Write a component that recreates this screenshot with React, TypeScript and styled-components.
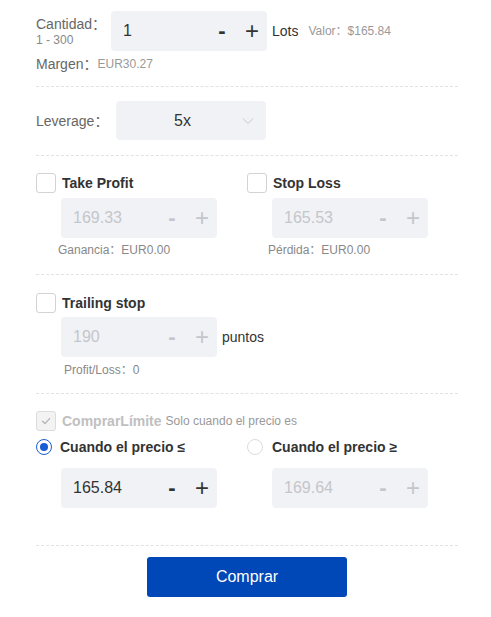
import { createGlobalStyle, styled } from "styled-components";

const GlobalStyle = createGlobalStyle`
    html, body {
        margin: 0;
        padding: 0;
        background: #fff;
        font-family: "Liberation Sans", Arial, "Noto Sans CJK SC", sans-serif;
        color: #333;
    }
`

const Page = styled.div`
    width: 422px;
    padding: 11px 33px 20px 36px;
`

const Row = styled.div<{ $mt?: number }>`
    display: flex;
    align-items: center;
    margin-top: ${p => p.$mt ?? 0}px;
`

const LabelCol = styled.div`
    width: 75px;
    display: flex;
    flex-direction: column;
`

const Label = styled.span<{ $w?: number }>`
    font-size: 14px;
    line-height: 18px;
    color: #666;
    width: ${p => (p.$w ? `${p.$w}px` : "auto")};
`

const Hint = styled.span<{ $light?: boolean }>`
    font-size: 12px;
    line-height: 14px;
    color: ${p => (p.$light ? "#999" : "#888")};
`

const Unit = styled.span<{ $ml?: number }>`
    font-size: 14px;
    color: #333;
    margin-left: ${p => p.$ml ?? 5}px;
`

const Divider = styled.div<{ $mt: number }>`
    margin-top: ${p => p.$mt}px;
    border-top: 1px dashed #e2e2e2;
`

const Box = styled.div<{ $disabled?: boolean }>`
    width: 156px;
    height: 40px;
    box-sizing: border-box;
    background: #f1f2f5;
    border-radius: 4px;
    display: flex;
    align-items: center;
    padding-left: 12px;
    color: ${p => (p.$disabled ? "#c4c6cc" : "#333")};
`

const Value = styled.span`
    flex: 1;
    font-size: 16px;
`

const StepBtn = styled.span<{ $minus?: boolean }>`
    width: 30px;
    text-align: center;
    font-size: ${p => (p.$minus ? 22 : 24)}px;
    font-weight: ${p => (p.$minus ? 700 : 400)};
    line-height: 40px;
    cursor: pointer;
`

const Select = styled.div`
    width: 150px;
    height: 39px;
    margin-left: 12px;
    box-sizing: border-box;
    background: #f1f2f5;
    border-radius: 4px;
    display: flex;
    align-items: center;
    padding-left: 58px;
    padding-right: 12px;
    font-size: 16px;
    color: #333;
    span { flex: 1; }
`

const Section = styled.div<{ $pt: number }>`
    padding-top: ${p => p.$pt}px;
`

const Columns = styled.div`
    display: grid;
    grid-template-columns: 211px 211px;
`

const Col = styled.div`
    display: flex;
    flex-direction: column;
`

const Header = styled.label`
    display: flex;
    align-items: center;
    height: 20px;
`

const Check = styled.span<{ $disabled?: boolean }>`
    width: 20px;
    height: 20px;
    box-sizing: border-box;
    border: 1px solid ${p => (p.$disabled ? "#dcdcdc" : "#d3d3d3")};
    background: ${p => (p.$disabled ? "#f3f3f3" : "#fff")};
    border-radius: 3px;
    display: flex;
    align-items: center;
    justify-content: center;
`

const Radio = styled.span<{ $on?: boolean }>`
    width: 16px;
    height: 16px;
    box-sizing: border-box;
    border-radius: 50%;
    border: 1px solid ${p => (p.$on ? "#1a5cd4" : "#dcdcdc")};
    display: flex;
    align-items: center;
    justify-content: center;
    &::after {
        content: "";
        width: 8px;
        height: 8px;
        border-radius: 50%;
        background: ${p => (p.$on ? "#1a5cd4" : "transparent")};
    }
`

const Title = styled.span<{ $muted?: boolean; $ml?: number }>`
    margin-left: ${p => p.$ml ?? 6}px;
    font-size: 14px;
    font-weight: 700;
    color: ${p => (p.$muted ? "#c0c0c0" : "#333")};
`

const Indent = styled.div<{ $mt: number }>`
    margin-left: 25px;
    margin-top: ${p => p.$mt}px;
    display: flex;
    align-items: center;
`

const SubNote = styled.div<{ $ml: number; $mt: number }>`
    margin-left: ${p => p.$ml}px;
    margin-top: ${p => p.$mt}px;
    font-size: 12px;
    line-height: 14px;
    color: #888;
`

const BtnRow = styled.div`
    display: flex;
    justify-content: center;
    margin-top: 11px;
`

const BuyButton = styled.button`
    width: 200px;
    height: 40px;
    border: none;
    border-radius: 3px;
    background: #0047b7;
    color: #fff;
    font-family: inherit;
    font-size: 16px;
    cursor: pointer;
`

function Stepper({ value, disabled }: { value: string; disabled?: boolean }) {
    return (
        <Box $disabled={disabled}>
            <Value>{value}</Value>
            <StepBtn $minus>-</StepBtn>
            <StepBtn>+</StepBtn>
        </Box>
    )
}

function Tick({ color }: { color: string }) {
    return (
        <svg width="12" height="12" viewBox="0 0 12 12">
            <path d="M2.5 6.2 L5 8.6 L9.6 3.6" fill="none" stroke={color} strokeWidth="1.4" strokeLinecap="round" strokeLinejoin="round" />
        </svg>
    )
}

function Chevron() {
    return (
        <svg width="12" height="8" viewBox="0 0 12 8">
            <path d="M1 1.5 L6 6.5 L11 1.5" fill="none" stroke="#c4c6cc" strokeWidth="1" />
        </svg>
    )
}

export default function App() {
    return (
        <Page>
            <GlobalStyle />
            <Row>
                <LabelCol>
                    <Label>Cantidad：</Label>
                    <Hint>1 - 300</Hint>
                </LabelCol>
                <Stepper value="1" />
                <Unit>Lots</Unit>
                <Hint $light style={{ marginLeft: 10 }}>Valor：$165.84</Hint>
            </Row>
            <Row $mt={4}>
                <Label>Margen：</Label>
                <Hint $light>EUR30.27</Hint>
            </Row>
            <Divider $mt={13} />

            <Row $mt={14}>
                <Label $w={68}>Leverage：</Label>
                <Select>
                    <span>5x</span>
                    <Chevron />
                </Select>
            </Row>
            <Divider $mt={15} />

            <Section $pt={17}>
                <Columns>
                    <Col>
                        <Header><Check /><Title>Take Profit</Title></Header>
                        <Indent $mt={5}><Stepper value="169.33" disabled /></Indent>
                        <SubNote $ml={22} $mt={5}>Ganancia：EUR0.00</SubNote>
                    </Col>
                    <Col>
                        <Header><Check /><Title>Stop Loss</Title></Header>
                        <Indent $mt={5}><Stepper value="165.53" disabled /></Indent>
                        <SubNote $ml={21} $mt={5}>Pérdida：EUR0.00</SubNote>
                    </Col>
                </Columns>
            </Section>
            <Divider $mt={17} />

            <Section $pt={18}>
                <Header><Check /><Title>Trailing stop</Title></Header>
                <Indent $mt={4}>
                    <Stepper value="190" disabled />
                    <Unit>puntos</Unit>
                </Indent>
                <SubNote $ml={28} $mt={6}>Profit/Loss：0</SubNote>
            </Section>
            <Divider $mt={16} />

            <Section $pt={17}>
                <Header>
                    <Check $disabled><Tick color="#b5b5b5" /></Check>
                    <Title $muted>ComprarLímite</Title>
                    <Hint $light style={{ marginLeft: 4 }}>Solo cuando el precio es</Hint>
                </Header>
                <Columns style={{ marginTop: 6 }}>
                    <Col>
                        <Header><Radio $on /><Title $ml={8}>Cuando el precio ≤</Title></Header>
                        <Indent $mt={11}><Stepper value="165.84" /></Indent>
                    </Col>
                    <Col>
                        <Header><Radio /><Title $ml={9}>Cuando el precio ≥</Title></Header>
                        <Indent $mt={11}><Stepper value="169.64" disabled /></Indent>
                    </Col>
                </Columns>
            </Section>
            <Divider $mt={37} />

            <BtnRow>
                <BuyButton>Comprar</BuyButton>
            </BtnRow>
        </Page>
    )
}
